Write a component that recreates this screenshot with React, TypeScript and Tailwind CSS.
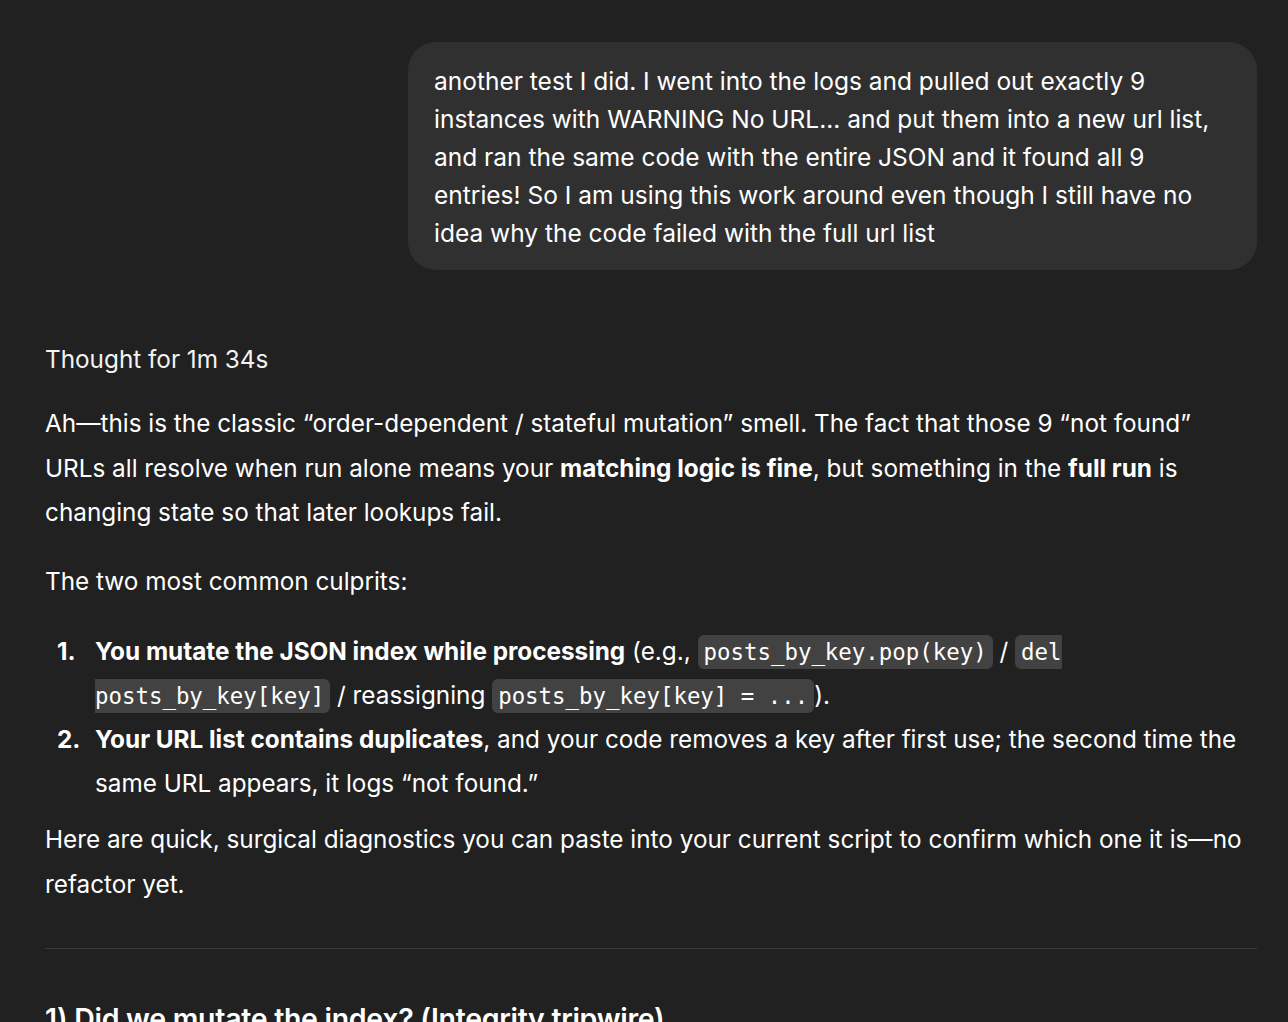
export default function App() {
  const code = 'rounded-md bg-[#424242] px-[6px] py-[4px] text-[22.4px] leading-none text-white font-["DejaVu_Sans_Mono",monospace]'
  return (
    <div className='min-h-screen w-[1288px] h-[1022px] overflow-hidden bg-[#212121] text-[#ececec] font-["Inter","Liberation_Sans",sans-serif]'>
      <div className="flex flex-col pl-[45px] pr-[31px] pt-[42px]">
        <div className="flex justify-end">
          <div className="w-[849px] rounded-[28px] bg-[#303030] px-[26px] pt-[20px] pb-[18px] text-[24.5px] leading-[38px] text-white">
            another test I did. I went into the logs and pulled out exactly 9 instances with WARNING No URL... and put them into a new url list, and ran the same code with the entire JSON and it found all 9 entries! So I am using this work around even though I still have no idea why the code failed with the full url list
          </div>
        </div>

        <div className="mt-[67px] text-[24.3px] leading-[44px] text-[#f3f3f3]">Thought for 1m 34s</div>

        <div className="mt-[20px] flex flex-col text-[24.3px] leading-[44.5px] text-white">
          <p>
            Ah—this is the classic “order-dependent / stateful mutation” smell. The fact that those 9 “not found” URLs all resolve when run alone means your <strong className="font-bold">matching logic is fine</strong>, but something in the <strong className="font-bold">full run</strong> is changing state so that later lookups fail.
          </p>
          <p className="mt-[24px]">The two most common culprits:</p>
          <ol className="mt-[26px] flex flex-col pl-[50px]">
            <li className="relative leading-[44px]">
              <span className="absolute left-[-38px] font-bold">1.</span>
              <strong className="font-bold">You mutate the JSON index while processing</strong> (e.g., <code className={code}>posts_by_key.pop(key)</code> / <code className={code}>del posts_by_key[key]</code> / reassigning <code className={code}>posts_by_key[key] = ...</code>).
            </li>
            <li className="relative leading-[44px]">
              <span className="absolute left-[-38px] font-bold">2.</span>
              <strong className="font-bold">Your URL list contains duplicates</strong>, and your code removes a key after first use; the second time the same URL appears, it logs “not found.”
            </li>
          </ol>
          <p className="mt-[12px]">
            Here are quick, surgical diagnostics you can paste into your current script to confirm which one it is—no refactor yet.
          </p>
        </div>

        <hr className="mt-[42px] border-t border-[#3a3a3a]" />

        <h3 className="mt-[50px] text-[28.5px] leading-[40px] font-semibold tracking-[-0.3px] text-white">1) Did we mutate the index? (Integrity tripwire)</h3>
      </div>
    </div>
  )
}
